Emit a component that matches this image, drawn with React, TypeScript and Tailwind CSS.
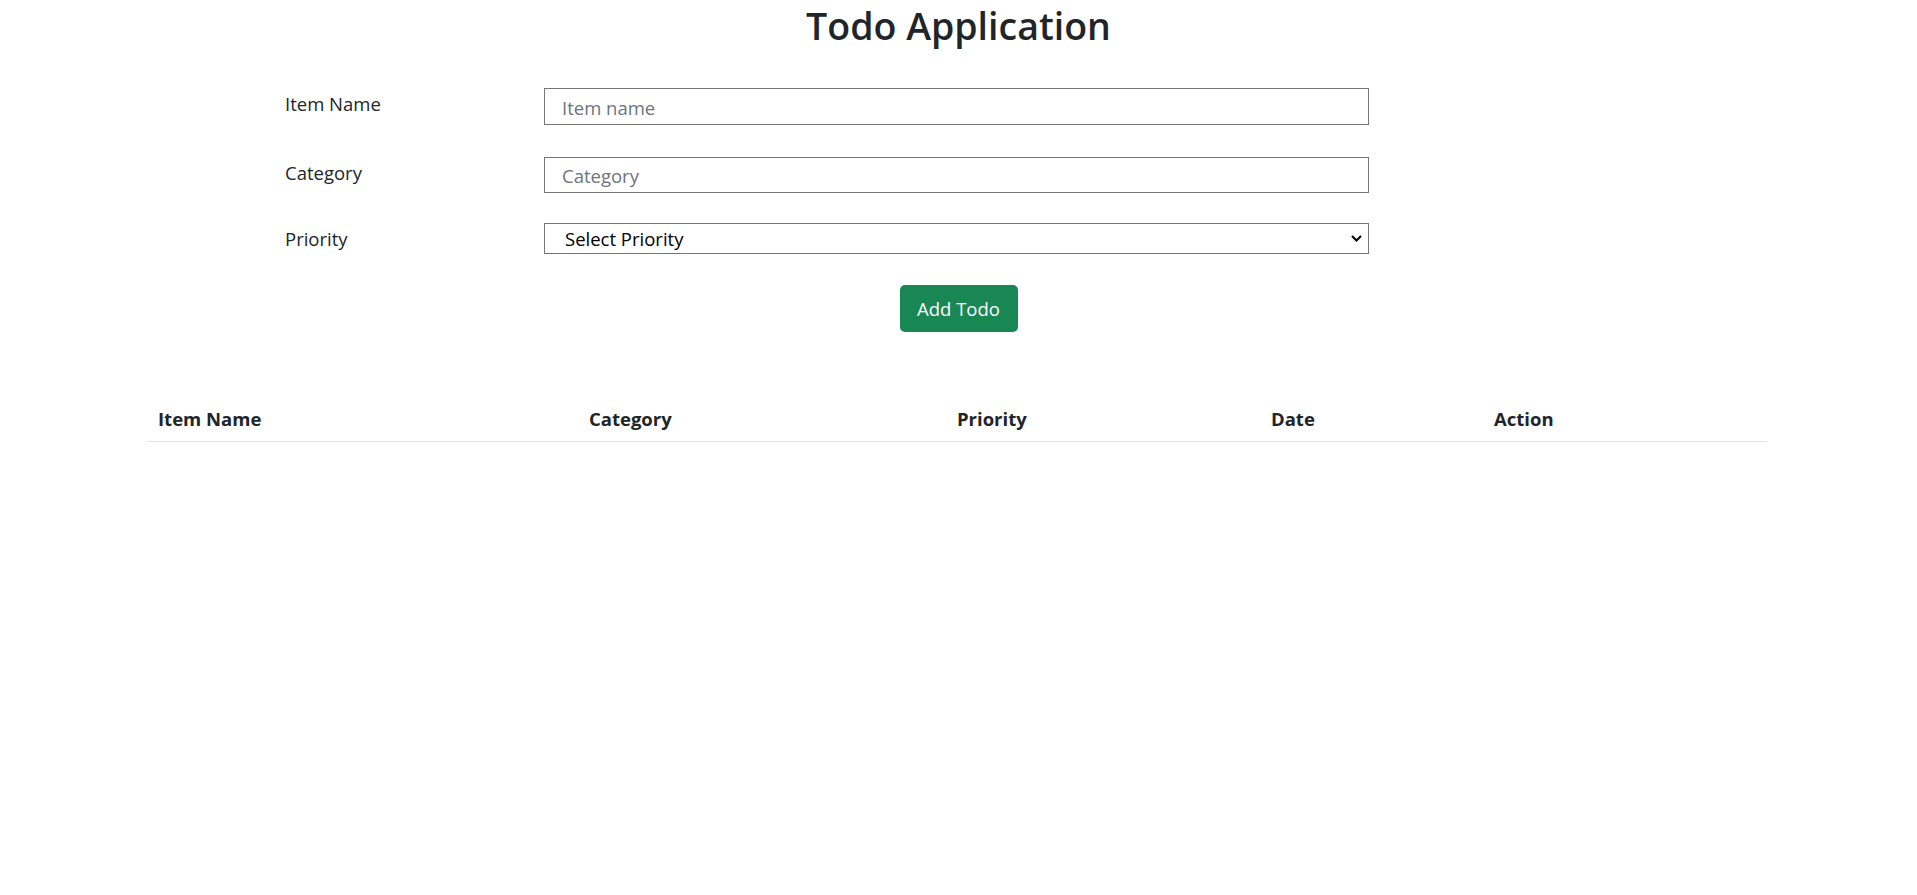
export default function App() {
    return (
        <main className="min-h-screen bg-white text-[#212529] font-['Open_Sans',sans-serif]">
            {/* Title */}
            <h1 className="pt-[4px] text-center text-[37.5px] leading-[44px] font-semibold">Todo Application</h1>

            {/* Form */}
            <form className="mt-[40px] flex flex-col pl-[285px]" onSubmit={(e) => e.preventDefault()}>
                <div className="flex items-center">
                    <label className="w-[259px] -mt-[5px] text-[18.5px]">Item Name</label>
                    <input
                        type="text"
                        placeholder="Item name"
                        className="h-[37px] w-[825px] border border-[#767676] pl-[17px] pr-4 pt-[2px] text-[18.5px] placeholder:text-[#6c757d] outline-none"
                    />
                </div>
                <div className="mt-[32px] flex items-center">
                    <label className="w-[259px] -mt-[5px] text-[18.5px]">Category</label>
                    <input
                        type="text"
                        placeholder="Category"
                        className="h-[36px] w-[825px] border border-[#767676] pl-[17px] pr-4 pt-[1px] text-[18.5px] placeholder:text-[#6c757d] outline-none"
                    />
                </div>
                <div className="mt-[30px] flex items-center">
                    <label className="w-[259px] text-[18.5px]">Priority</label>
                    <div className="relative w-[825px]">
                        <select className="h-[31px] w-full appearance-none border border-[#767676] bg-white pl-[20px] pt-[1px] text-[18.5px] text-black outline-none">
                            <option>Select Priority</option>
                            <option>High</option>
                            <option>Medium</option>
                            <option>Low</option>
                        </select>
                        <svg
                            width="11"
                            height="7"
                            viewBox="0 0 11 7"
                            className="pointer-events-none absolute right-[7px] top-[12px]"
                            aria-hidden="true"
                        >
                            <path d="M1 1L5.5 5.5L10 1" fill="none" stroke="black" strokeWidth="2" />
                        </svg>
                    </div>
                </div>
            </form>

            {/* Add button */}
            <div className="mt-[31px] flex justify-center">
                <button className="h-[47px] w-[118px] rounded-[5px] bg-[#198754] text-[18.5px] text-white">Add Todo</button>
            </div>

            {/* Table */}
            <table className="ml-[147px] mt-[64px] w-[1620px] table-fixed border-collapse text-left">
                <thead>
                    <tr className="border-b border-[#dee2e6]">
                        <th className="w-[434px] pl-[11px] pr-2 py-2 text-[18.5px] leading-[29px] font-bold">Item Name</th>
                        <th className="w-[368px] px-2 py-2 text-[18.5px] leading-[29px] font-bold">Category</th>
                        <th className="w-[314px] px-2 py-2 text-[18.5px] leading-[29px] font-bold">Priority</th>
                        <th className="w-[223px] px-2 py-2 text-[18.5px] leading-[29px] font-bold">Date</th>
                        <th className="w-[281px] px-2 py-2 text-[18.5px] leading-[29px] font-bold">Action</th>
                    </tr>
                </thead>
                <tbody></tbody>
            </table>
        </main>
    );
}
